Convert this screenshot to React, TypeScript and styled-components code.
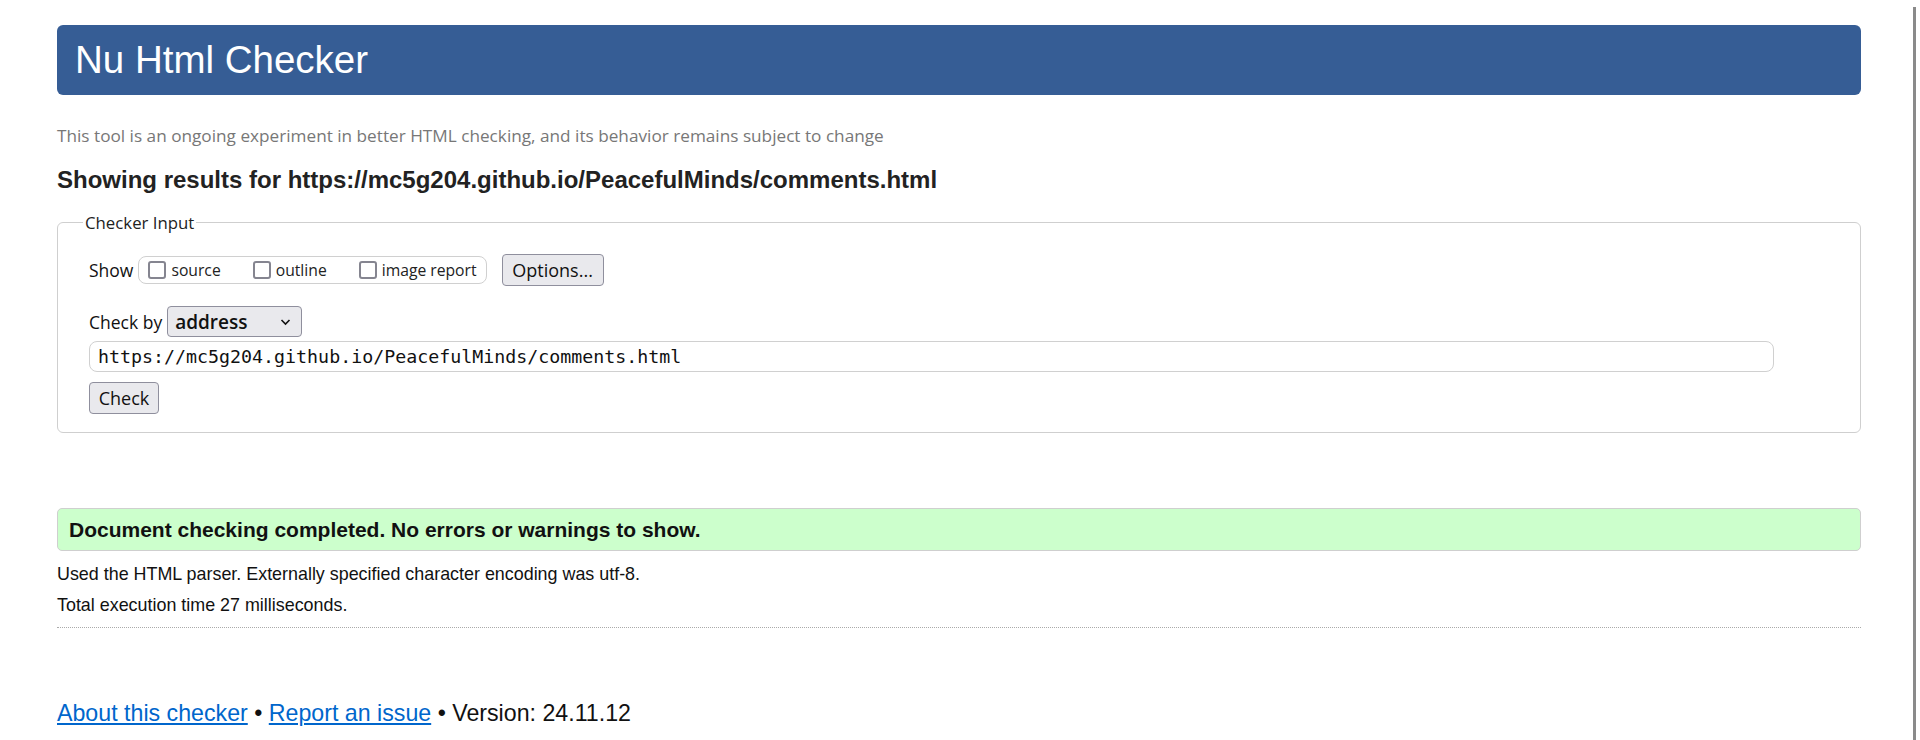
import React from "react";
import styled, { createGlobalStyle } from "styled-components";

const Global = createGlobalStyle`
  html, body { margin: 0; padding: 0; background: #fff; }
  body { font-family: "Liberation Sans", Arial, sans-serif; color: #222; }
`;

const UI = `"Open Sans", "Noto Sans", sans-serif`;

const Page = styled.div`
  padding: 25px 59px 0 57px;
  display: flex;
  flex-direction: column;
`;

const Header = styled.h1`
  margin: 0;
  height: 70px;
  background: #365d95;
  border-radius: 6px;
  color: #fff;
  font-weight: normal;
  font-size: 38.5px;
  line-height: 70px;
  padding: 0 18px;
`;

const Subtitle = styled.p`
  margin: 30px 0 0;
  font-family: ${UI};
  font-size: 17.2px;
  line-height: 22px;
  color: #777;
`;

const Results = styled.h2`
  margin: 19px 0 0;
  font-size: 24px;
  line-height: 28px;
  font-weight: bold;
  color: #222;
`;

const Fieldset = styled.fieldset`
  margin: 17px 0 0;
  border: 1px solid #cfcfcf;
  border-radius: 6px;
  padding: 20px 30px 18px 31px;
  display: flex;
  flex-direction: column;
  min-width: 0;
`;

const Legend = styled.legend`
  font-family: ${UI};
  font-size: 16.8px;
  color: #222;
  margin-left: -6px;
  padding: 0 2px;
`;

const Row = styled.div`
  display: flex;
  align-items: center;
  font-family: ${UI};
  font-size: 17.5px;
  color: #111;
`;

const ShowRow = styled(Row)`
  margin-top: 0;
`;

const CheckRow = styled(Row)`
  margin-top: 20px;
`;

const Group = styled.span`
  display: inline-flex;
  align-items: center;
  height: 26px;
  margin-left: 5px;
  padding: 0 9px;
  border: 1px solid #d0d0d0;
  border-radius: 8px;
  gap: 32px;
`;

const CheckLabel = styled.label`
  display: inline-flex;
  align-items: center;
  gap: 5px;
  font-size: 15.7px;
  color: #222;
`;

const Box = styled.input`
  appearance: none;
  margin: 0;
  width: 18px;
  height: 18px;
  border: 2px solid #858590;
  border-radius: 3px;
  background: #fff;
  box-sizing: border-box;
`;

const Button = styled.button`
  font-family: ${UI};
  font-size: 18px;
  color: #111;
  background: #e9e9ed;
  border: 1px solid #8f8f9d;
  border-radius: 4px;
  height: 32px;
  padding: 0 6px;
  line-height: 30px;
`;

const OptionsButton = styled(Button)`
  margin-left: 15px;
  width: 102px;
  padding: 0;
`;

const SubmitButton = styled(Button)`
  align-self: flex-start;
  margin-top: 10px;
  width: 70px;
  padding: 0;
`;

const SelectWrap = styled.span`
  position: relative;
  display: inline-flex;
  margin-left: 5px;
`;

const Select = styled.select`
  appearance: none;
  font-family: ${UI};
  font-size: 19px;
  font-weight: 600;
  color: #111;
  background: #e9e9ed;
  border: 1px solid #8f8f9d;
  border-radius: 4px;
  width: 135px;
  height: 31px;
  padding: 0 0 0 7px;
`;

const Chevron = styled.svg`
  position: absolute;
  right: 11px;
  top: 12px;
  pointer-events: none;
`;

const UrlInput = styled.input`
  margin-top: 4px;
  margin-right: 56px;
  height: 31px;
  box-sizing: border-box;
  border: 1px solid #d0d0d0;
  border-radius: 8px;
  padding: 0 8px;
  font-family: "DejaVu Sans Mono", "Liberation Mono", monospace;
  font-size: 18.3px;
  color: #111;
  outline: none;
`;

const Success = styled.p`
  margin: 75px 0 0;
  height: 43px;
  box-sizing: border-box;
  background: #ccffcc;
  border: 1px solid #cfcfcf;
  border-radius: 5px;
  padding: 0 11px;
  font-size: 21px;
  font-weight: bold;
  line-height: 41px;
  color: #111;
`;

const Info = styled.p<{ $top: number }>`
  margin: ${(p) => p.$top}px 0 0;
  font-size: 17.9px;
  line-height: 20px;
  color: #111;
`;

const Rule = styled.hr`
  margin: 12px 0 0;
  border: 0;
  border-top: 1px dotted #aaa;
  height: 0;
`;

const Footer = styled.p`
  margin: 72px 0 0;
  font-size: 23.2px;
  line-height: 26px;
  color: #111;
`;

const Link = styled.a`
  color: #0066cc;
  text-decoration: underline;
  text-underline-offset: 2px;
`;

const Thumb = styled.div`
  position: fixed;
  top: 7px;
  bottom: 0;
  right: 4px;
  width: 3px;
  background: #8a8a8a;
`;

export default function App() {
  return (
    <>
      <Global />
      <Page>
        <Header>Nu Html Checker</Header>
        <Subtitle>
          This tool is an ongoing experiment in better HTML checking, and its behavior remains subject to change
        </Subtitle>
        <Results>Showing results for https://mc5g204.github.io/PeacefulMinds/comments.html</Results>
        <Fieldset>
          <Legend>Checker Input</Legend>
          <ShowRow>
            Show
            <Group>
              <CheckLabel>
                <Box type="checkbox" />
                source
              </CheckLabel>
              <CheckLabel>
                <Box type="checkbox" />
                outline
              </CheckLabel>
              <CheckLabel>
                <Box type="checkbox" />
                image report
              </CheckLabel>
            </Group>
            <OptionsButton type="button">Options...</OptionsButton>
          </ShowRow>
          <CheckRow>
            Check by
            <SelectWrap>
              <Select defaultValue="address">
                <option value="address">address</option>
                <option value="file">file upload</option>
                <option value="text">text input</option>
              </Select>
              <Chevron width="11" height="8" viewBox="0 0 11 8">
                <path d="M1.5 2 L5.5 6 L9.5 2" fill="none" stroke="#111" strokeWidth="1.6" />
              </Chevron>
            </SelectWrap>
          </CheckRow>
          <UrlInput defaultValue="https://mc5g204.github.io/PeacefulMinds/comments.html" />
          <SubmitButton type="button">Check</SubmitButton>
        </Fieldset>
        <Success>Document checking completed. No errors or warnings to show.</Success>
        <Info $top={13}>Used the HTML parser. Externally specified character encoding was utf-8.</Info>
        <Info $top={11}>Total execution time 27 milliseconds.</Info>
        <Rule />
        <Footer>
          <Link href="#">About this checker</Link> • <Link href="#">Report an issue</Link> • Version: 24.11.12
        </Footer>
      </Page>
      <Thumb />
    </>
  );
}
